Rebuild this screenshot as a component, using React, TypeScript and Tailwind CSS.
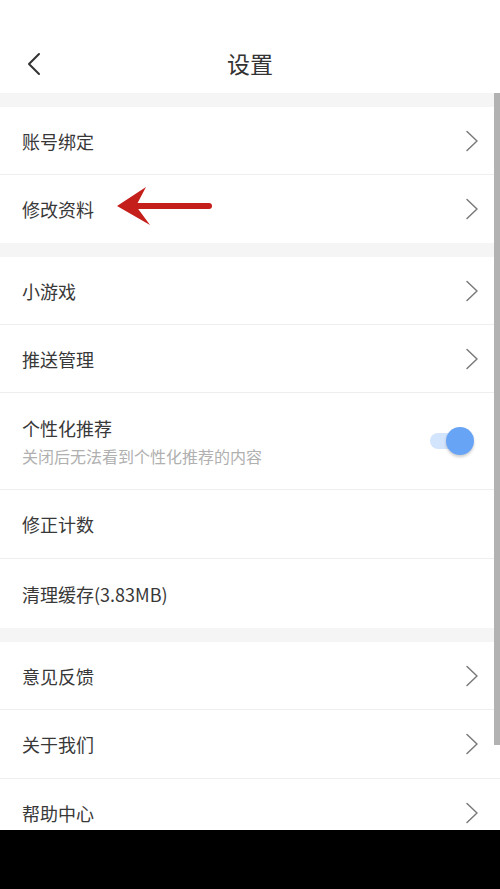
import React from 'react';

interface Item {
  label: string;
  sub?: string;
  arrow?: boolean;
  toggle?: boolean;
  h: string;
  last?: boolean;
  pointer?: boolean;
}

const sections: Item[][] = [
  [
    { label: '账号绑定', arrow: true, h: 'h-[68px]' },
    { label: '修改资料', arrow: true, h: 'h-[68px]', last: true, pointer: true },
  ],
  [
    { label: '小游戏', arrow: true, h: 'h-[68px]' },
    { label: '推送管理', arrow: true, h: 'h-[68px]' },
    { label: '个性化推荐', sub: '关闭后无法看到个性化推荐的内容', toggle: true, h: 'h-[97px]' },
    { label: '修正计数', h: 'h-[69px]' },
    { label: '清理缓存(3.83MB)', h: 'h-[69px]', last: true },
  ],
  [
    { label: '意见反馈', arrow: true, h: 'h-[68px]' },
    { label: '关于我们', arrow: true, h: 'h-[69px]' },
    { label: '帮助中心', arrow: true, h: 'h-[68px]', last: true },
  ],
];

function Chevron() {
  return (
    <svg width="14" height="22" viewBox="0 0 14 22" fill="none">
      <path d="M2 1.5 L12 11 L2 20.5" stroke="#7a7a7a" strokeWidth="1.5" strokeLinecap="round" strokeLinejoin="round" />
    </svg>
  );
}

function RedArrow() {
  return (
    <svg className="absolute left-[115px] top-[10px]" width="100" height="42" viewBox="0 0 100 42">
      <line x1="22" y1="21" x2="94" y2="21" stroke="#c41f1a" strokeWidth="6" strokeLinecap="round" />
      <polygon points="2,21 31,2 21,21 35,40" fill="#c41f1a" />
    </svg>
  );
}

function Row({ item }: { item: Item }) {
  return (
    <div
      className={`relative flex items-center justify-between pl-[22px] pr-[21px] bg-white ${item.h} ${
        item.last ? '' : 'border-b border-[#eeeeee]'
      }`}
    >
      {item.sub ? (
        <div className="flex flex-col gap-[6px]">
          <span className="text-[18px] leading-[24px] text-[#383838]">{item.label}</span>
          <span className="text-[16px] leading-[20px] text-[#b0b0b0]">{item.sub}</span>
        </div>
      ) : (
        <span className="text-[18px] leading-[24px] text-[#383838]">{item.label}</span>
      )}
      {item.arrow && <Chevron />}
      {item.toggle && (
        <div className="relative mr-[9px] w-[40px] h-[16px] rounded-full bg-[#d3e5fc]">
          <div className="absolute right-[-4px] top-[-6px] w-[28px] h-[28px] rounded-full bg-[#68a4f6] shadow-[0_2px_3px_rgba(0,0,0,0.2)]" />
        </div>
      )}
      {item.pointer && <RedArrow />}
    </div>
  );
}

export default function App() {
  return (
    <div className="relative w-[500px] h-[889px] flex flex-col bg-white overflow-hidden font-['Noto_Sans_CJK_SC','Noto_Sans',sans-serif]">
      <div className="h-[93px] pt-[42px] bg-white shrink-0">
        <div className="relative h-[42px] flex items-center justify-center">
          <svg className="absolute left-[26px] top-[10px]" width="16" height="24" viewBox="0 0 16 24" fill="none">
            <path d="M13 2 L3 12 L13 22" stroke="#333333" strokeWidth="2" strokeLinecap="round" strokeLinejoin="round" />
          </svg>
          <span className="text-[23px] text-[#333333]">设置</span>
        </div>
      </div>

      <div className="flex-1 overflow-hidden bg-[#f5f5f5]">
        {sections.map((sec, si) => (
          <div key={`sec-${si}`} className="pt-[14px]">
            {sec.map((item, ii) => (
              <Row key={`row-${si}-${ii}`} item={item} />
            ))}
          </div>
        ))}
      </div>

      <div className="h-[59px] bg-black shrink-0" />

      <div className="absolute right-0 top-[93px] w-[6px] h-[652px] bg-[#b2b2b2]" />
    </div>
  );
}
